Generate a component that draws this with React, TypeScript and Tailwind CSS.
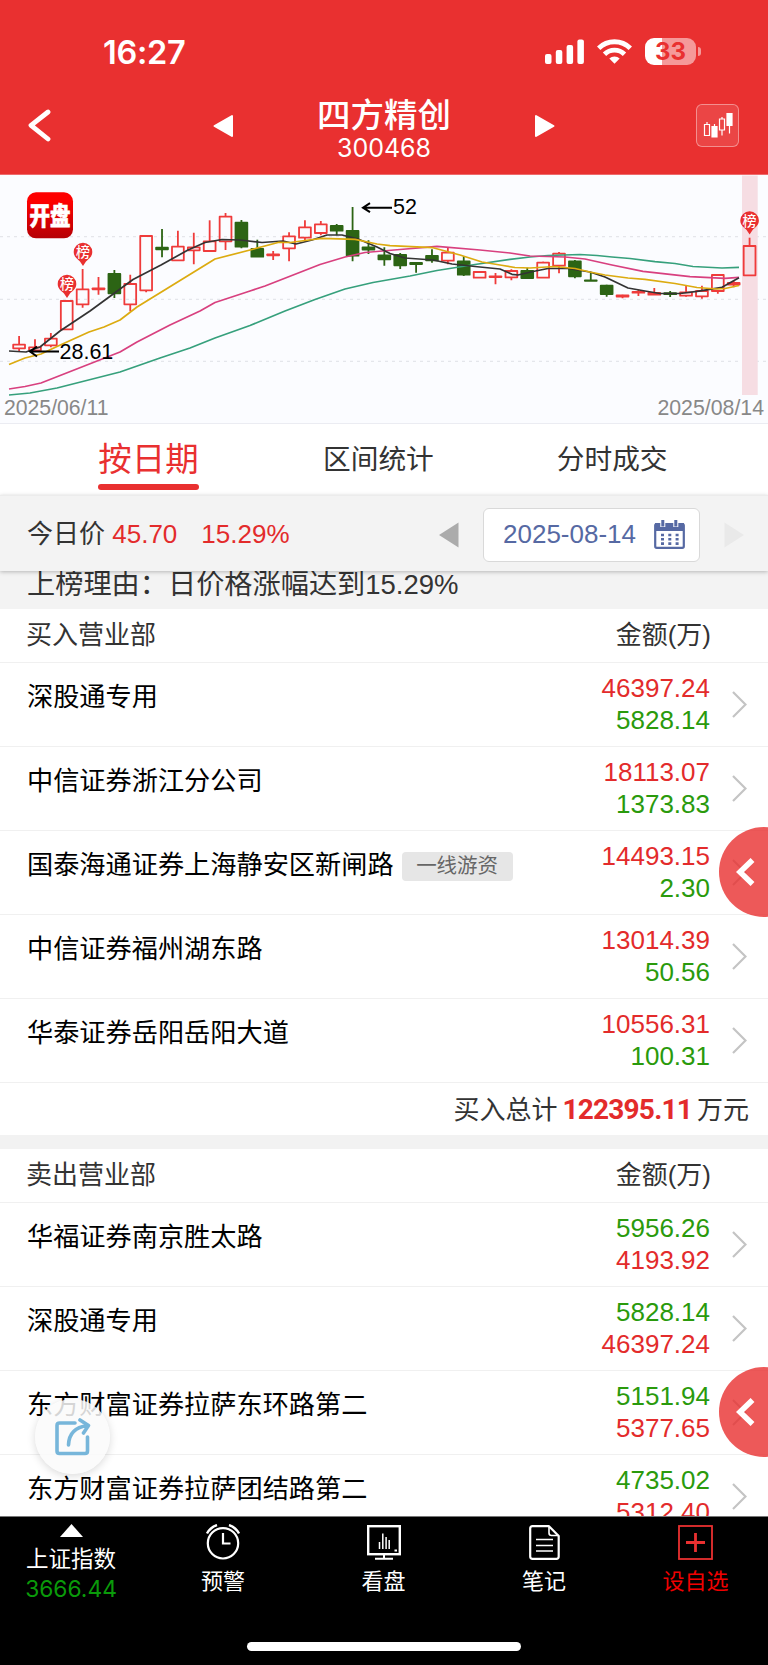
import clsx from 'clsx';

type Candle = [kind: 'r' | 'g', high: number, top: number, bottom: number, low: number];

const candles: Candle[] = [
    ['r', 166, 174.7, 178.3, 181],
    ['r', 169.3, 177.3, 180.3, 181],
    ['r', 163, 168.7, 175.3, 177.3],
    ['r', 131, 131, 159.3, 159.3],
    ['r', 99, 119.3, 134.3, 137.7],
    ['r', 107, 118.3, 119.3, 124.7],
    ['g', 100, 104, 123.3, 128],
    ['r', 104.7, 114, 134.3, 141.3],
    ['r', 65.7, 66, 120.3, 122.3],
    ['g', 59, 77.7, 79.3, 87.3],
    ['r', 60.7, 76.7, 90.3, 90.3],
    ['r', 62.7, 77.3, 80.3, 94.3],
    ['r', 50.3, 71.3, 81, 81],
    ['r', 43, 46.7, 71.3, 80],
    ['g', 50, 52.7, 76.7, 78.3],
    ['g', 69.7, 79, 86.7, 86.7],
    ['r', 81, 84.3, 85.3, 90],
    ['r', 62.3, 66.3, 78.3, 91.3],
    ['r', 50.3, 57.3, 67.7, 71],
    ['r', 51, 54.3, 63, 65.3],
    ['g', 54, 56, 60.7, 65.3],
    ['g', 37, 61, 85.7, 91.3],
    ['g', 70.3, 77.3, 79.5, 84],
    ['g', 77.3, 85.3, 89.3, 95.7],
    ['g', 83, 85, 95.3, 99],
    ['g', 92.3, 93, 94, 102.7],
    ['g', 79.3, 86, 90.3, 92.7],
    ['r', 77.7, 82.7, 90.7, 94.3],
    ['g', 86, 91.3, 104.7, 106],
    ['r', 101.3, 102, 107.7, 107.7],
    ['r', 103, 106.3, 107, 114.3],
    ['r', 99.3, 101, 107.3, 110.3],
    ['g', 97.7, 101, 108, 108.3],
    ['r', 91.7, 92.7, 107.7, 107.7],
    ['r', 82, 83.7, 95.7, 103.3],
    ['g', 90, 91.3, 106.3, 108.3],
    ['g', 102.3, 110.3, 110.8, 111],
    ['g', 114.7, 115.7, 124, 126.7],
    ['r', 124.7, 125.5, 126.5, 128.3],
    ['r', 119.7, 122, 122.7, 126],
    ['r', 118, 123, 124.7, 125],
    ['g', 121, 123.2, 124.2, 127],
    ['r', 115, 122.3, 125.7, 126.7],
    ['r', 115.7, 121, 126.3, 128.7],
    ['r', 104.7, 105, 121, 123.7],
    ['r', 110.7, 113, 114.5, 117.3],
    ['r', 67.7, 76, 105.3, 105.3],
];

const averages = [
    {
        color: '#36a07c',
        points: '9,225 30,223 57,218 120,202 160,188 190,178 215,168 250,155.5 285,141 315,129.5 345,119 373,112.5 410,106 437,100.5 475,94.5 510,89.3 530,87 548,85.5 580,84.5 597,85.5 612,87 630,88.5 655,91.7 675,93.5 693,96.5 722,98 739,97.3',
    },
    {
        color: '#d8407f',
        points: '9,219 25,216.5 41,213 120,182 137,172 170,155 200,141 215,132.5 250,121 265,116 320,94.5 345,87 365,82.5 400,79.5 437,76.3 480,80 510,83 530,86 565,87 585,89 612,95 643,101.3 690,106.7 725,108.3 739,107.3',
    },
    {
        color: '#333333',
        points: '9,181 26,182 40,177 60,161 90,141 133,109.5 161,95 188,80 205,72.5 222,69.5 240,70 262,72.5 283,71 296,74 312,70 327,65 342,65 358,69 377,77 390,83.5 405,88 433,90 452,94 475,96.5 500,99 512,104.3 518,105 533,101.5 548,98.5 568,98.5 590,102 605,107 628,118 645,121 660,123.5 680,123.5 697,121.3 722,117.3 739,107.7',
    },
    {
        color: '#dcab10',
        points: '9,194.5 25,188 41,184 57,176.5 89,162 104,157 120,150 137,137 215,89 252,79.5 279,72.3 290,72.5 305,70.5 322,68.3 355,69.3 377,74 390,75.7 433,77.7 460,85 482,92 500,95 515,97.5 530,98 555,96.5 575,98.5 590,102 605,105 628,108 645,109.3 675,113.5 697,117.5 717,119 725,118.5 739,115.5',
    },
];

const buyRows = [
    { name: '深股通专用', first: '46397.24', second: '5828.14' },
    { name: '中信证券浙江分公司', first: '18113.07', second: '1373.83' },
    { name: '国泰海通证券上海静安区新闸路', first: '14493.15', second: '2.30', tag: '一线游资' },
    { name: '中信证券福州湖东路', first: '13014.39', second: '50.56' },
    { name: '华泰证券岳阳岳阳大道', first: '10556.31', second: '100.31' },
];

const sellRows = [
    { name: '华福证券南京胜太路', first: '5956.26', second: '4193.92' },
    { name: '深股通专用', first: '5828.14', second: '46397.24' },
    { name: '东方财富证券拉萨东环路第二', first: '5151.94', second: '5377.65' },
    { name: '东方财富证券拉萨团结路第二', first: '4735.02', second: '5312.40' },
];

function StatusBar() {
    return (
        <div className="flex h-[82px] items-end pl-[103px] pr-[67px]">
            <span className="mb-[9px] flex-1 font-['Inter'] text-[32.5px] font-semibold leading-[40px] tracking-[-0.3px]">16:27</span>
            <svg className="mb-[18px] mr-[13px] h-[25px] w-[39px]" viewBox="0 0 39 25" fill="#fff">
                <rect x="0" y="15" width="6.5" height="10" rx="2" />
                <rect x="10.8" y="11" width="6.5" height="14" rx="2" />
                <rect x="21.6" y="6" width="6.5" height="19" rx="2" />
                <rect x="32.4" y="0.5" width="6.5" height="24.5" rx="2" />
            </svg>
            <svg className="mb-[18px] mr-[13px] h-[25px] w-[35px]" viewBox="0 0 35 25" fill="none" stroke="#fff" strokeWidth="4.8">
                <path d="M1.7 9.2a22.6 22.6 0 0 1 31.6 0" />
                <path d="M7.5 15.2a14.3 14.3 0 0 1 20 0" />
                <path d="M17.5 24.8l-5.2-5.2a7.4 7.4 0 0 1 10.4 0z" fill="#fff" stroke="none" />
            </svg>
            <div className="mb-[17px] flex items-center">
                <div className="flex h-[27px] w-[51px] items-center justify-center rounded-[9px] bg-[linear-gradient(90deg,#fff_0,#fff_33%,#f59999_33%)] font-['Inter'] text-[24px] font-bold leading-none text-[#e93030]">
                    33
                </div>
                <div className="ml-[2px] h-[9px] w-[3px] rounded-r-full bg-[#f59999]" />
            </div>
        </div>
    );
}

function TitleBar() {
    return (
        <div className="flex h-[87px] items-center">
            <svg className="ml-[28px] h-[33px] w-[23px]" viewBox="0 0 23 33" fill="none" stroke="#fff" strokeWidth="4.8" strokeLinecap="round" strokeLinejoin="round">
                <path d="M20 3L3 16.3L20 30" />
            </svg>
            <svg className="ml-[162px] h-[24px] w-[21px]" viewBox="0 0 21 24" fill="#fff" stroke="#fff" strokeWidth="2" strokeLinejoin="round">
                <path d="M19 2v20L1.5 12z" />
            </svg>
            <div className="flex flex-1 flex-col items-center pt-[8px]">
                <h1 className="text-[33.5px] font-medium leading-[38px]">四方精创</h1>
                <span className="mt-[-1px] font-['Inter'] text-[25px] leading-[28px]">300468</span>
            </div>
            <svg className="h-[24px] w-[21px]" viewBox="0 0 21 24" fill="#fff" stroke="#fff" strokeWidth="2" strokeLinejoin="round">
                <path d="M2 2v20L19.5 12z" />
            </svg>
            <div className="ml-[141px] mr-[29px] flex size-[43px] items-center justify-center rounded-[6px] border border-white/40 bg-white/10">
                <svg className="h-[27px] w-[30px]" viewBox="0 0 30 27" fill="none" stroke="#fff" strokeWidth="1.2">
                    <path d="M4 10v2.5M1.5 12.5h5v11h-5zM11.5 12v3M19 5v2M16.5 7h5v11h-5zM19 18v5.5M26.5 14v7.5" />
                    <path d="M9 14.5h5V25H9zM24 1.5h5v12h-5z" fill="#fff" />
                </svg>
            </div>
        </div>
    );
}

function RankPin({ x, y }: { x: number; y: number }) {
    return (
        <g>
            <path d={`M${x - 9.3} ${y}a9.3 9.3 0 1 1 18.6 0c0 5-4 7-6.3 9.5l-3 4.5l-3-4.5c-2.3-2.5-6.3-4.5-6.3-9.5z`} fill="#e93030" />
            <text x={x} y={y + 5} textAnchor="middle" fontSize="14" fontWeight="500" fill="#fff">榜</text>
        </g>
    );
}

function KLineChart() {
    return (
        <div className="border-b border-[#ebecf2] bg-[#fbfcff]">
            <svg className="block h-[248px] w-full" viewBox="0 5 768 248">
                <defs>
                    <linearGradient id="logo" x1="0" y1="0" x2="0" y2="1">
                        <stop offset="0.2" stopColor="#fd0000" />
                        <stop offset="1" stopColor="#b50005" />
                    </linearGradient>
                </defs>
                {[66.7, 129.3, 191.3].map((y) => (
                    <line key={y} x1="0" x2="768" y1={y} y2={y} stroke="#dfe0e6" strokeDasharray="3 4" />
                ))}
                <rect x="742" y="5.5" width="15.7" height="219.5" fill="#f6dde3" />
                {candles.map(([kind, high, top, bottom, low], i) => {
                    const x = 19.1 + 15.88 * i;
                    const color = kind === 'r' ? '#ef3b3b' : '#2c6414';
                    return (
                        <g key={i} stroke={color} strokeWidth="1.8">
                            <path d={`M${x} ${high}V${top}M${x} ${bottom}V${low}`} />
                            <rect
                                x={x - 5.9}
                                y={top}
                                width="11.8"
                                height={bottom - top}
                                fill={kind === 'r' ? 'none' : color}
                                strokeLinejoin="round"
                            />
                        </g>
                    );
                })}
                {averages.map((line) => (
                    <polyline key={line.color} points={line.points} fill="none" stroke={line.color} strokeWidth="1.7" strokeLinejoin="round" />
                ))}
                <RankPin x={67} y={114} />
                <RankPin x={83} y={82} />
                <RankPin x={749.6} y={50.5} />
                <rect x="27" y="22.3" width="46" height="46" rx="9" fill="url(#logo)" />
                <text transform="translate(50 54.8) scale(1 1.22)" textAnchor="middle" fontSize="20.5" fontWeight="900" fill="#fff" stroke="#fff" strokeWidth="0.5">
                    开盘
                </text>
                <g fill="none" stroke="#000" strokeWidth="2">
                    <path d="M59 181.5H30M37 176.5l-7 5l7 5" />
                    <path d="M392 37.7h-29M370 33.2l-7 4.5l7 4.5" />
                </g>
                <g className="font-['Liberation_Sans']">
                    <text x="59.5" y="188.5" fontSize="21.5" fill="#000">28.61</text>
                    <text x="393" y="44.3" fontSize="21.5" fill="#000">52</text>
                    <text x="4" y="244.8" fontSize="21.2" fill="#888">2025/06/11</text>
                    <text x="764" y="244.8" fontSize="21.3" textAnchor="end" fill="#888">2025/08/14</text>
                </g>
            </svg>
        </div>
    );
}

function Tabs() {
    return (
        <div className="flex h-[71px] text-[27.7px] text-[#333]">
            <div className="ml-[98px] flex w-[101px] flex-col items-center">
                <span className="mt-[12px] whitespace-nowrap text-[33.5px] leading-[48px] text-[#e93030]">按日期</span>
                <span className="h-[6px] w-full rounded-full bg-[#e93030]" />
            </div>
            <span className="ml-[124px] mt-[16px] leading-[40px]">区间统计</span>
            <span className="ml-[123px] mt-[16px] leading-[40px]">分时成交</span>
        </div>
    );
}

function DateBar() {
    return (
        <div className="relative z-10 flex h-[76px] items-center border-t border-[#ececec] bg-[#f3f3f3] pt-[2px] text-[26px] text-[#333] shadow-[0_1px_4px_rgba(0,0,0,0.25)]">
            <span className="ml-[27px] flex-1 whitespace-pre">
                今日价 <span className="text-[#e32b2b]">45.70</span>
                <span className="ml-[24px] text-[#e32b2b]">15.29%</span>
            </span>
            <svg className="h-[26px] w-[20px]" viewBox="0 0 20 26">
                <path d="M19.5 0.5v25L0 13z" fill="#ababab" />
            </svg>
            <div className="ml-[24px] flex h-[54px] w-[217px] items-center rounded-[6px] border border-[#d9d9d9] bg-white pl-[19px] text-[#5669a3]">
                <span className="flex-1">2025-08-14</span>
                <svg className="mr-[14px] h-[29px] w-[31px]" viewBox="0 0 31 29" fill="none" stroke="#5669a3">
                    <rect x="1.2" y="4" width="28.6" height="23.8" rx="1.5" strokeWidth="2.2" />
                    <path d="M1 3h29v8H1z" fill="#5669a3" stroke="none" />
                    <path d="M8.8 0v7M21.8 0v7" stroke="#fff" strokeWidth="5" />
                    <path d="M8.8 0v6.5M21.8 0v6.5" strokeWidth="3" />
                    <path d="M7 15h18M7 19.3h18M7 23.6h18" strokeWidth="2.6" strokeDasharray="3 4.3" />
                </svg>
            </div>
            <svg className="ml-[24px] mr-[24px] h-[26px] w-[20px]" viewBox="0 0 20 26">
                <path d="M0.5 0.5v25L20 13z" fill="#e9e9e9" />
            </svg>
        </div>
    );
}

function SectionHeader({ title }: { title: string }) {
    return (
        <div className="flex h-[54px] items-center justify-between border-b border-[#f0f0f0] pb-px pl-[26px] pr-[57px] text-[26px] text-[#333]">
            <span>{title}</span>
            <span>金额(万)</span>
        </div>
    );
}

type RowProps = { name: string; first: string; second: string; tag?: string; sell?: boolean };

function Row({ name, first, second, tag, sell }: RowProps) {
    return (
        <div className="flex h-[84px] border-b border-[#f0f0f0] pl-[27px] pr-[21px] text-[26px]">
            <div className="flex h-[70px] flex-1 items-center text-[26.2px] text-black">
                <span>{name}</span>
                {tag && <span className="ml-[8px] mt-px h-[29px] w-[111px] rounded-[4px] bg-[#e6e6e6] text-center text-[20.5px] leading-[28px] text-[#666]">{tag}</span>}
            </div>
            <div className="flex flex-col pt-[9px] text-right leading-[32px]">
                <span className={clsx(sell ? 'text-[#2a9a0c]' : 'text-[#e32b2b]')}>{first}</span>
                <span className={clsx(sell ? 'text-[#e32b2b]' : 'text-[#2a9a0c]')}>{second}</span>
            </div>
            <svg className="ml-[22px] mt-[28px] h-[27px] w-[15px]" viewBox="0 0 15 27" fill="none" stroke="#c4c4c4" strokeWidth="2.2">
                <path d="M1 1l12.5 12.5L1 26" />
            </svg>
        </div>
    );
}

function SideHandle({ className }: { className: string }) {
    return (
        <div className={clsx('absolute left-[719px] flex size-[90px] items-center rounded-full bg-[#e93030]/80 pl-[17px]', className)}>
            <svg className="h-[28px] w-[19px]" viewBox="0 0 19 28" fill="none" stroke="#fff" strokeWidth="5.6">
                <path d="M16.5 2L4 14l12.5 12" />
            </svg>
        </div>
    );
}

function BottomBar() {
    return (
        <div className="relative flex h-[149px] shrink-0 border-t border-[#777] bg-black text-[22px] leading-[30px] text-white">
            <div className="flex w-[142px] flex-col items-center">
                <svg className="mt-[7px] h-[13px] w-[23px]" viewBox="0 0 23 13">
                    <path d="M11.5 0L23 13H0z" fill="#fff" />
                </svg>
                <span className="mt-[8px] text-[22.5px]">上证指数</span>
                <span className="font-['Inter'] text-[22.8px] leading-[28px] text-[#0a9a0a]">3666.44</span>
            </div>
            <div className="flex w-[162px] flex-col items-center">
                <svg className="mt-[7px] h-[36px] w-[34px]" viewBox="0 0 34 36" fill="none" stroke="#fff" strokeWidth="2.2">
                    <circle cx="17" cy="19.3" r="15.2" />
                    <path d="M17 9v10.500h7.500" />
                    <path d="M1 9.500Q4 3.500 11 1M33 9.500Q30 3.500 23 1" strokeWidth="2.400" />
                </svg>
                <span className="mt-[7px]">预警</span>
            </div>
            <div className="flex w-[159px] flex-col items-center">
                <svg className="mt-[8px] h-[35px] w-[34px]" viewBox="0 0 34 35" fill="none" stroke="#fff" strokeWidth="2.4">
                    <rect x="1.2" y="1.2" width="31.6" height="28" />
                    <path d="M12.5 24v-7M15.8 24V8.5M19.1 24V12M22.2 24v-9" strokeWidth="1.5" />
                    <path d="M17 29v4.5M8 33.7h18M27.5 25.5h2.5" strokeWidth="2" />
                </svg>
                <span className="mt-[7px]">看盘</span>
            </div>
            <div className="flex w-[162px] flex-col items-center">
                <svg className="mt-[8px] h-[35px] w-[31px]" viewBox="0 0 31 35" fill="none" stroke="#fff" strokeWidth="2.2" strokeLinejoin="round">
                    <path d="M3.500 1.200H20L29.700 11v20.500q0 2.300-2.300 2.300H3.500q-2.300 0-2.300-2.300v-28q0-2.300 2.300-2.300z" />
                    <path d="M20 1.500V8q0 2.500 2.500 2.500h7" strokeWidth="1.6" />
                    <path d="M7 14.5h17M7 20.5h17M7 26h17" strokeWidth="1.6" />
                </svg>
                <span className="mt-[7px]">笔记</span>
            </div>
            <div className="flex w-[141px] flex-col items-center">
                <svg className="mt-[8px] h-[35px] w-[35px]" viewBox="0 0 35 35" fill="none" stroke="#e93030">
                    <rect x="1" y="1" width="33" height="33" strokeWidth="1.8" />
                    <path d="M17.5 8v19M8 17.5h19" strokeWidth="2.8" />
                </svg>
                <span className="mt-[7px] text-[#f00000]">设自选</span>
            </div>
            <div className="absolute bottom-[14px] left-[247px] h-[9px] w-[274px] rounded-full bg-white" />
        </div>
    );
}

export default function App() {
    return (
        <div className="flex h-[1665px] w-[768px] flex-col overflow-hidden bg-white font-['Liberation_Sans','Noto_Sans_CJK_SC',sans-serif]">
            <header className="h-[175px] shrink-0 border-b border-[#ee6a6c] bg-[#e93030] text-white">
                <StatusBar />
                <TitleBar />
            </header>
            <KLineChart />
            <Tabs />
            <DateBar />
            <div className="relative h-[945px] shrink-0 overflow-hidden">
                <div className="h-[38px] bg-[#f3f3f3] pl-[27px] text-[28.2px] leading-[27px] text-[#333]">
                    上榜理由：日价格涨幅达到<span className="text-[27.5px]">15.29%</span>
                </div>
                <SectionHeader title="买入营业部" />
                {buyRows.map((row) => (
                    <Row key={row.name} {...row} />
                ))}
                <div className="flex h-[52px] items-center justify-end pr-[19px] pt-[2px] text-[26px] text-[#333]">
                    <span>买入总计</span>
                    <span className="mx-[5px] font-['Roboto'] text-[28px] font-bold tracking-[-0.8px] text-[#e32b2b]">122395.11</span>
                    <span>万元</span>
                </div>
                <div className="h-[14px] bg-[#f2f2f2]" />
                <SectionHeader title="卖出营业部" />
                {sellRows.map((row) => (
                    <Row key={row.name} {...row} sell />
                ))}
                <SideHandle className="top-[256px]" />
                <SideHandle className="top-[796px]" />
                <div className="absolute left-[35px] top-[828px] flex size-[75px] items-center justify-center rounded-full bg-[#fafafa]/85 shadow-[0_2px_8px_rgba(0,0,0,0.15)]">
                    <svg className="h-[38px] w-[36px]" viewBox="0 0 36 38" fill="none" stroke="#77b6da" strokeWidth="3.6" strokeLinecap="round" strokeLinejoin="round">
                        <path d="M20 5H4.5Q2 5 2 7.5V33q0 2.5 2.5 2.5H30q2.5 0 2.5-2.5V19" />
                        <path d="M13.5 27Q14 10 32.5 7.5M25 2l8.5 5.5L28.5 15" />
                    </svg>
                </div>
            </div>
            <BottomBar />
        </div>
    );
}
